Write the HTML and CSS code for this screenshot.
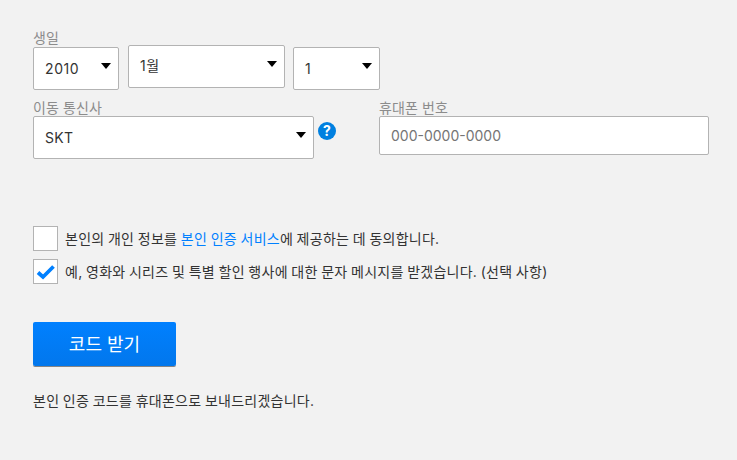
FILE: index.html
```html
<!DOCTYPE html>
<html lang="ko">
<head>
    <meta charset="UTF-8">
    <meta name="viewport" content="width=device-width, initial-scale=1.0">
    <title>본인 인증</title>
    <link rel="stylesheet" href="styles.css">
</head>
<body>
    <form class="wrapper">
        <div class="field-label birth-label">생일</div>
        <div class="birth-row">
            <div class="select-box year-box">2010</div>
            <div class="select-box month-box">1월</div>
            <div class="select-box day-box">1</div>
        </div>
        <div class="carrier-row">
            <div class="carrier-group">
                <div class="field-label">이동 통신사</div>
                <div class="select-box carrier-box">SKT</div>
            </div>
            <span class="help-icon">?</span>
            <div class="phone-group">
                <label class="field-label" for="phone">휴대폰 번호</label>
                <input type="text" id="phone" class="phone-input" placeholder="000-0000-0000">
            </div>
        </div>
        <div class="terms">
            <div class="terms-item">
                <span class="check-box"></span>
                <span class="terms-text">본인의 개인 정보를 <a href="#" class="terms-link">본인 인증 서비스</a>에 제공하는 데 동의합니다.</span>
            </div>
            <div class="terms-item">
                <span class="check-box">
                    <svg width="20" height="16" viewBox="0 0 20 16"><path d="M2 8.5 7 13 17.5 2.5" fill="none" stroke="#0080ff" stroke-width="3.8"/></svg>
                </span>
                <span class="terms-text">예, 영화와 시리즈 및 특별 할인 행사에 대한 문자 메시지를 받겠습니다. (선택 사항)</span>
            </div>
        </div>
        <button type="button" class="code-button">코드 받기</button>
        <p class="note">본인 인증 코드를 휴대폰으로 보내드리겠습니다.</p>
    </form>
</body>
</html>
```

FILE: styles.css
```css
* {
    box-sizing: border-box;
}
body {
    margin: 0;
    background-color: #f2f2f2;
    color: #333;
    font-family: Inter, "Noto Sans CJK KR", sans-serif;
    font-size: 14px;
    letter-spacing: 0.25px;
    word-spacing: -0.6px;
}
.wrapper {
    padding: 31px 28px 0 33px;
}
.field-label {
    display: block;
    height: 15px;
    line-height: 13px;
    color: #8c8c8c;
    font-size: 14px;
    letter-spacing: 0.1px;
    word-spacing: 0;
}
.birth-row {
    display: flex;
    align-items: flex-start;
    margin-top: -1px;
}
.select-box {
    position: relative;
    height: 43px;
    padding-left: 11px;
    border: 1px solid #b3b3b3;
    border-radius: 2px;
    background-color: #fff;
    font-size: 14px;
    letter-spacing: 0.6px;
    line-height: 41px;
}
.select-box::after {
    content: "";
    position: absolute;
    top: 15px;
    right: 7px;
    border-top: 6px solid #000;
    border-left: 5px solid transparent;
    border-right: 5px solid transparent;
}
.year-box {
    width: 86px;
    margin-top: 2px;
}
.month-box {
    width: 157px;
    margin-left: 9px;
    line-height: 40px;
}
.day-box {
    width: 87px;
    margin-top: 2px;
    margin-left: 8px;
}
.carrier-row {
    display: flex;
    align-items: flex-start;
    margin-top: 11px;
}
.carrier-group {
    width: 281px;
}
.carrier-box {
    width: 281px;
    letter-spacing: 0.3px;
}
.help-icon {
    width: 18px;
    height: 18px;
    margin-top: 21px;
    margin-left: 4px;
    border-radius: 50%;
    background-color: #0080e0;
    color: #fff;
    font-size: 14px;
    font-weight: 700;
    letter-spacing: 0;
    line-height: 18px;
    text-align: center;
}
.phone-group {
    width: 330px;
    margin-left: 43px;
}
.phone-input {
    display: block;
    width: 330px;
    height: 39px;
    padding: 0 11px;
    border: 1px solid #b3b3b3;
    border-radius: 2px;
    background-color: #fff;
    color: #333;
    font-family: inherit;
    font-size: 14px;
    letter-spacing: 0;
}
.phone-input::placeholder {
    color: #757575;
    opacity: 1;
}
.terms {
    display: flex;
    flex-direction: column;
    gap: 8px;
    margin-top: 67px;
}
.terms-item {
    display: flex;
    align-items: center;
    gap: 7px;
    height: 25px;
}
.terms-text {
    padding-bottom: 2px;
}
.check-box {
    display: flex;
    align-items: center;
    justify-content: center;
    width: 25px;
    height: 25px;
    border: 1px solid #b3b3b3;
    background-color: #fff;
}
.terms-link {
    color: #0080ff;
    text-decoration: none;
}
.code-button {
    display: block;
    width: 143px;
    height: 44px;
    margin-top: 38px;
    padding: 0 0 3px;
    border: none;
    border-radius: 2px;
    background: linear-gradient(#0080ff, #0277ec);
    box-shadow: 0 1px 0 rgba(0,0,0,0.45);
    color: #fff;
    font-family: inherit;
    font-size: 18px;
    cursor: pointer;
}
.note {
    margin: 27px 0 0;
    line-height: 16px;
}
```
